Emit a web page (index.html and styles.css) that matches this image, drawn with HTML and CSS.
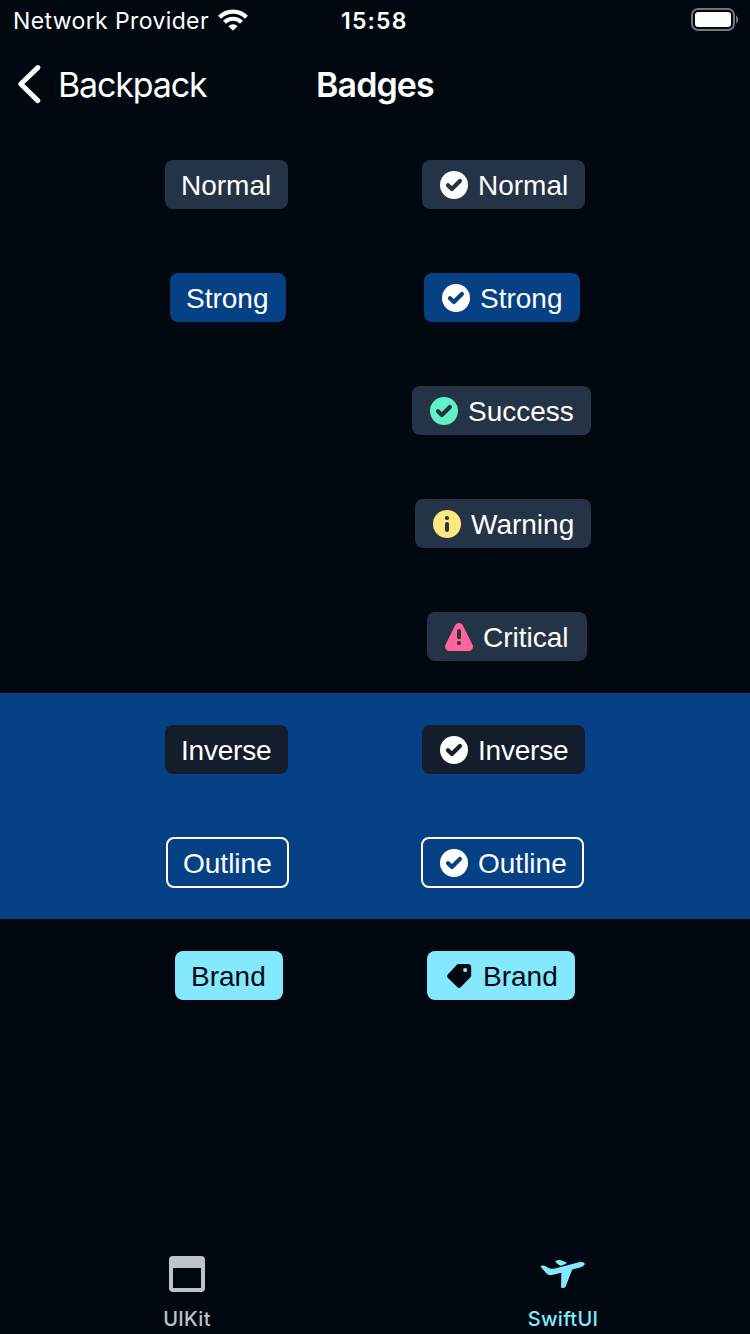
FILE: index.html
```
<!DOCTYPE html>
<html lang="en">
<head>
<meta charset="utf-8">
<title>Badges</title>
<link rel="stylesheet" href="styles.css">
</head>
<body>
<svg class="defs" width="0" height="0" aria-hidden="true">
  <symbol id="tick" viewBox="0 0 28 28">
    <circle cx="14" cy="14" r="14" fill="currentColor"/>
    <path class="cut" d="M8 14.2 11.9 18 19.9 10.1" fill="none" stroke-width="4.2" stroke-linecap="round" stroke-linejoin="round"/>
  </symbol>
</svg>
<div class="screen">
  <div class="status">
    <span class="carrier">Network Provider</span>
    <svg class="wifi" width="30" height="22" viewBox="0 0 30 22" fill="none" stroke="#fff">
      <path d="M1.6 8.2A19 19 0 0 1 28.4 8.2" stroke-width="4.3"/>
      <path d="M6.5 13.2A12.1 12.1 0 0 1 23.5 13.2" stroke-width="4.1"/>
      <path d="M15 21.8 10.4 17.2A6.6 6.6 0 0 1 19.6 17.2Z" fill="#fff" stroke="none"/>
    </svg>
    <span class="time">15:58</span>
    <svg class="battery" width="48" height="23" viewBox="0 0 48 23">
      <rect x="1" y="1" width="42" height="21" rx="6" fill="none" stroke="#737578" stroke-width="2"/>
      <rect x="4" y="4" width="36" height="15" rx="3.2" fill="#fff"/>
      <path d="M45 7.5C47.7 8.6 47.7 14.4 45 15.5Z" fill="#737578"/>
    </svg>
  </div>
  <div class="nav">
    <svg class="back" width="24" height="40" viewBox="0 0 24 40" fill="none" stroke="#fff" stroke-width="5" stroke-linecap="round" stroke-linejoin="round"><path d="M20.8 3.6 3.8 20 20.8 36.6"/></svg>
    <span class="back-label">Backpack</span>
    <h1 class="title">Badges</h1>
  </div>
  <main class="list">
    <div class="row">
      <div class="badge normal text-normal">Normal</div>
      <div class="badge normal icon-normal"><svg class="icon"><use href="#tick"/></svg>Normal</div>
    </div>
    <div class="row">
      <div class="badge strong text-strong">Strong</div>
      <div class="badge strong icon-strong"><svg class="icon"><use href="#tick"/></svg>Strong</div>
    </div>
    <div class="row">
      <div class="badge normal icon-success"><svg class="icon success"><use href="#tick"/></svg>Success</div>
    </div>
    <div class="row">
      <div class="badge normal icon-warning"><svg class="icon warning" viewBox="0 0 28 28"><circle cx="14" cy="14" r="14" fill="currentColor"/><circle cx="14" cy="8" r="2.1" fill="#243346"/><path class="cut" d="M14 14V20" stroke-width="4" stroke-linecap="round"/></svg>Warning</div>
    </div>
    <div class="row">
      <div class="badge normal icon-critical"><svg class="icon critical" viewBox="0 0 28 28"><path d="M10.2 2.2C11.8-.7 16.2-.7 17.8 2.2L27.4 21.6C29 24.6 27 28 23.7 28H4.3C1 28-1 24.6.6 21.6Z" fill="currentColor"/><path class="cut" d="M14 8V14.2" stroke-width="4" stroke-linecap="round"/><circle cx="14" cy="20" r="2.1" fill="#243346"/></svg>Critical</div>
    </div>
    <div class="row blue">
      <div class="badge inverse text-normal">Inverse</div>
      <div class="badge inverse icon-normal"><svg class="icon"><use href="#tick"/></svg>Inverse</div>
    </div>
    <div class="row blue">
      <div class="badge outline text-outline">Outline</div>
      <div class="badge outline icon-outline"><svg class="icon"><use href="#tick"/></svg>Outline</div>
    </div>
    <div class="row">
      <div class="badge brand text-brand">Brand</div>
      <div class="badge brand icon-brand"><svg class="icon" viewBox="0 0 28 28"><path fill-rule="evenodd" d="M14 2H22.8C25.2 2 26.2 3.2 26.2 5.2V13C26.2 14.2 25.8 15 25 15.8L15.9 25C14.9 26.2 13.3 26.2 12.2 25L3 16C1.8 14.9 1.8 13.3 3 12.2L11.2 3.4C12 2.5 12.8 2 14 2ZM20.2 6A2.1 2.1 0 1 0 20.2 10.2 2.1 2.1 0 1 0 20.2 6Z" fill="currentColor"/></svg>Brand</div>
    </div>
  </main>
  <nav class="tabs">
    <div class="tab uikit">
      <svg width="36" height="36" viewBox="0 0 36 36"><path fill-rule="evenodd" d="M4 0H32Q36 0 36 4V32Q36 36 32 36H4Q0 36 0 32V4Q0 0 4 0ZM4 12V32H32V12Z" fill="currentColor"/></svg>
      <span>UIKit</span>
    </div>
    <div class="tab swiftui">
      <svg width="46" height="36" viewBox="0 0 46 36" fill="currentColor"><path d="M1.3 9.7C3.5 9.3 5.5 10 7 11.1 9 12.8 12 13.3 15 12.5L38 6.4C41 5.6 44.5 6 44.8 7.8 45 9.4 42.5 10.8 40 11.4L32.3 13.4 25.8 30.2C25.2 31.7 23.7 32 22 32 21.4 32 21 31.6 21.1 31L21.3 16.8 11.8 19.1C9.7 19.5 8 19 6.5 17.5L1.2 11.4C.6 10.6.6 9.9 1.3 9.7Z"/><path d="M15.6 4.9C17.3 3.8 19.5 3.7 21 4.3L26.6 6.6C27 7.6 24 9.1 21 9.7 19.3 9.5 17 7.5 15.5 5.9 15.2 5.5 15.3 5.1 15.6 4.9Z"/></svg>
      <span>SwiftUI</span>
    </div>
  </nav>
</div>
</body>
</html>
```
FILE: styles.css
```
body { margin: 0; background: #010810; }
.defs { position: absolute; }
.screen {
  width: 750px; height: 1334px; overflow: hidden;
  display: flex; flex-direction: column;
  background: #010810; color: #fff;
  font-family: Inter, "Liberation Sans", sans-serif;
}
.status { height: 40px; display: flex; align-items: flex-start; box-sizing: border-box; padding-left: 13px; line-height: 43px; font-size: 23px; white-space: nowrap; }
.carrier { width: 205px; letter-spacing: .38px; }
.wifi { margin-top: 9px; }
.time { width: 120px; margin-left: 93px; font-weight: 600; letter-spacing: 1.2px; }
.battery { margin: 8px 0 0 230px; flex: none; }
.nav { height: 88px; display: flex; align-items: center; white-space: nowrap; }
.back { margin-left: 17px; }
.back-label { width: 258px; margin-left: 17px; font-size: 34px; letter-spacing: -1.15px; }
.title { margin: 0; font-size: 34px; font-weight: 600; letter-spacing: -.9px; }
.list { display: flex; flex-direction: column; }
.row { height: 113px; display: grid; grid-template-columns: 375px 375px; align-items: center; }
.blue { background: #054184; }
.badge {
  grid-row: 1; height: 49px; box-sizing: border-box; padding-left: 16px; border-radius: 8px;
  display: flex; align-items: center; white-space: nowrap;
  font: 28px/51px "Liberation Sans", Arial, sans-serif;
}
.badge { align-items: flex-start; }
.icon { width: 28px; height: 28px; margin: 11px 10px 0 2px; flex: none; }
.cut { stroke: var(--fill); }
.normal { --fill: #243346; background: var(--fill); }
.strong { --fill: #054184; background: var(--fill); }
.inverse { --fill: #131d2b; background: var(--fill); letter-spacing: -.2px; }
.outline { --fill: #054184; height: 51px; line-height: 49px; border: 2px solid #fff; padding-left: 15px; }
.outline .icon { margin-top: 10px; }
.brand { background: #84e9ff; color: #010810; }
.success { color: #62f1c6; }
.warning { color: #ffe97f; }
.critical { color: #ff649c; }
.text-normal { width: 123px; margin-left: 165px; }
.text-strong { width: 116px; margin-left: 170px; }
.text-outline { width: 123px; margin-left: 166px; }
.text-brand { width: 108px; margin-left: 175px; }
.icon-normal { width: 163px; margin-left: 47px; grid-column: 2; }
.icon-strong { width: 156px; margin-left: 49px; grid-column: 2; }
.icon-success { width: 179px; margin-left: 37px; grid-column: 2; }
.icon-warning { width: 176px; margin-left: 40px; grid-column: 2; }
.icon-critical { width: 160px; margin-left: 52px; grid-column: 2; }
.icon-outline { width: 163px; margin-left: 46px; grid-column: 2; }
.icon-brand { width: 148px; margin-left: 52px; grid-column: 2; }
.tabs { margin-top: auto; height: 78px; display: grid; grid-template-columns: 374px 378px; }
.tab { display: flex; flex-direction: column; align-items: center; gap: 14px; font-size: 20px; font-weight: 500; line-height: 26px; letter-spacing: .3px; }
.uikit { color: #bdc4cb; }
.swiftui { color: #84e9ff; }
```
